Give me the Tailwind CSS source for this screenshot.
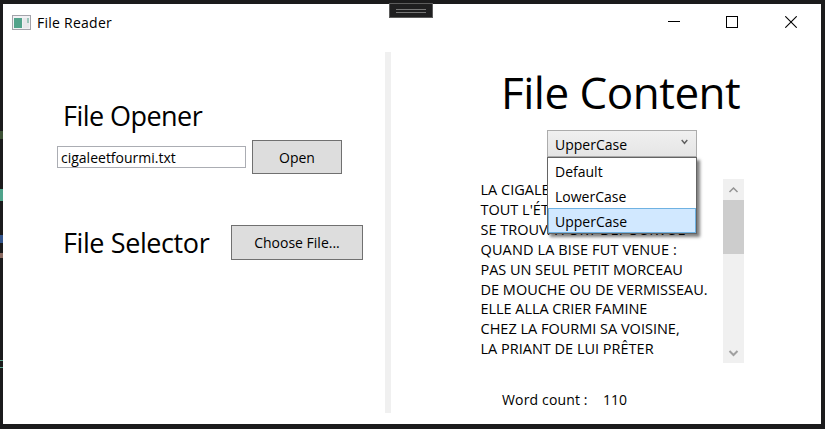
<!DOCTYPE html>
<html lang="en">
<head>
<meta charset="utf-8">
<title>File Reader</title>
<script src="https://cdn.jsdelivr.net/npm/@tailwindcss/browser@4"></script>
</head>
<body class="relative h-[429px] w-[825px] overflow-hidden bg-[#1b1b1c] pl-[3px] pt-1 font-['Open_Sans','Noto_Sans',sans-serif] text-[14px] text-black">
  <!-- editor text showing past the window's left edge -->
  <span class="absolute left-0 top-[131px] h-2 w-[3px] bg-[#3c5035]"></span>
  <span class="absolute left-0 top-[189px] h-3 w-[3px] bg-[#4fa38b]"></span>
  <span class="absolute left-0 top-[235px] h-2 w-[3px] bg-[#34558b]"></span>
  <span class="absolute left-0 top-[253px] h-[5px] w-[3px] bg-[#8a6a62]"></span>
  <span class="absolute left-0 top-[360px] h-2 w-[3px] border-y border-[#58a08c]"></span>

  <div class="flex h-[420px] w-[818px] flex-col bg-white whitespace-nowrap">
    <header class="flex h-9 items-center pl-[9px]">
      <svg class="h-[15px] w-[19px]" viewBox="0 0 19 15"><rect x=".5" y=".5" width="18" height="14" fill="#f1f1f4" stroke="#a3a3aa"/><rect x="2" y="3" width="8" height="10" fill="#52a38b"/><rect x="11" y="3" width="6" height="10" fill="#e7e7ea"/><path d="M16 3v5" stroke="#52a38b"/></svg>
      <h1 class="ml-[6px] text-[14px] tracking-[0.25px]">File Reader</h1>
      <svg class="ml-auto h-3 w-3" viewBox="0 0 12 12"><path d="M0 5.5h12" stroke="#000"/></svg>
      <svg class="ml-[46px] h-3 w-3" viewBox="0 0 12 12"><rect x=".5" y=".5" width="11" height="11" fill="none" stroke="#000"/></svg>
      <svg class="ml-[47px] mr-[24px] h-3 w-3" viewBox="0 0 12 12"><path d="M.3.3l11.4 11.4M11.7.3L.3 11.7" stroke="#000" stroke-width="1.1"/></svg>
    </header>

    <main class="flex">
      <section class="w-[382px] pl-[54px] pt-[57px]">
        <h2 class="ml-[6px] h-[38px] text-[27px] leading-[38px] tracking-[-0.55px]">File Opener</h2>
        <div class="mt-[5px] flex items-center gap-[6px]">
          <div class="h-[22px] w-[189px] border border-[#abadb3] pl-[3px] leading-[21px]">cigaleetfourmi.txt</div>
          <div class="flex h-[34px] w-[90px] items-center justify-center border border-[#707070] bg-[#ddd]">Open</div>
        </div>
        <div class="mt-[51px] flex items-center">
          <h2 class="ml-[6px] w-[168px] text-[27px] leading-[36px] tracking-[-0.4px]">File Selector</h2>
          <div class="relative -top-px flex h-[35px] w-[132px] items-center justify-center border border-[#707070] bg-[#ddd]">Choose File...</div>
        </div>
      </section>

      <div class="mt-3 h-[361px] w-[6px] bg-[#f0f0f0]"></div>

      <section class="w-[430px] pt-[20px]">
        <h2 class="ml-[110px] h-[62px] text-[44px] leading-[64px] tracking-[-0.5px]">File Content</h2>
        <div class="relative ml-[156px] mt-2 flex h-[27px] w-[150px] items-center border border-[#acacac] bg-gradient-to-b from-[#f0f0f0] to-[#e5e5e5] pl-[7px]">
          <span class="pt-px">UpperCase</span>
          <svg class="ml-auto mr-2 mb-1 h-[6px] w-[7px]" viewBox="0 0 7 6"><path d="M.7 1L3.5 4.3 6.3 1" fill="none" stroke="#606060" stroke-width="1.4"/></svg>
          <ul class="absolute -left-px top-[26px] w-[150px] border border-[#646464] bg-white shadow-[3px_3px_3px_rgba(0,0,0,0.5)]">
            <li class="h-[25px] pl-[7px] pt-[2px] leading-[24px]">Default</li>
            <li class="h-[25px] pl-[7px] pt-[2px] leading-[24px]">LowerCase</li>
            <li class="h-[25px] border border-[#6fb2e2] bg-[#d1e8ff] pl-[6px] leading-[25px]">UpperCase</li>
          </ul>
        </div>
        <div class="ml-[89px] mt-[22px] flex h-[184px] w-[264px] justify-between">
          <div class="pt-px pl-[0.5px] text-[14.5px] leading-[19.9px]">
            <p>LA CIGALE, AYANT CHANTÉ</p>
            <p>TOUT L'ÉTÉ,</p>
            <p>SE TROUVA FORT DÉPOURVUE</p>
            <p class="tracking-[0.12px]">QUAND LA BISE FUT VENUE :</p>
            <p class="tracking-[-0.05px]">PAS UN SEUL PETIT MORCEAU</p>
            <p>DE MOUCHE OU DE VERMISSEAU.</p>
            <p class="tracking-[-0.05px]">ELLE ALLA CRIER FAMINE</p>
            <p>CHEZ LA FOURMI SA VOISINE,</p>
            <p>LA PRIANT DE LUI PRÊTER</p>
          </div>
          <div class="flex w-[21px] flex-col items-center bg-[#f0f0f0]">
            <svg class="h-[21px] w-[21px] shrink-0" viewBox="0 0 21 21"><path d="M6.5 13L10.5 9l4 4" fill="none" stroke="#929292" stroke-width="1.5"/></svg>
            <div class="h-[54px] w-[21px] bg-[#cdcdcd]"></div>
            <svg class="mt-auto h-[21px] w-[21px] shrink-0" viewBox="0 0 21 21"><path d="M6.5 9l4 4 4-4" fill="none" stroke="#a0a0a0" stroke-width="2"/></svg>
          </div>
        </div>
        <p class="ml-[111px] mt-[27px] flex leading-[20px]"><span class="w-[101px] tracking-[0.15px]">Word count :</span><span>110</span></p>
      </section>
    </main>
  </div>

  <!-- debugger toolbar handle -->
  <div class="absolute left-[389px] top-[3px] flex h-[15px] w-[44px] items-center justify-center border border-[#5c5c5c] bg-[#1f1f20]">
    <div class="h-1 w-[30px] border-y border-[#777]"></div>
  </div>
</body>
</html>
